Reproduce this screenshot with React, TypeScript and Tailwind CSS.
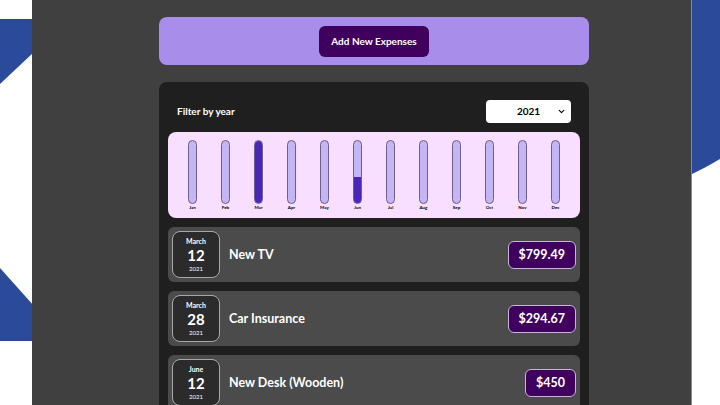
import { ChevronDown } from "lucide-react"

const months = ["Jan", "Feb", "Mar", "Apr", "May", "Jun", "Jul", "Aug", "Sep", "Oct", "Nov", "Dec"]
const fills = [0, 0, 100, 0, 0, 42, 0, 0, 0, 0, 0, 0]

const expenses = [
    { month: "March", day: "12", year: "2021", title: "New TV", amount: "$799.49" },
    { month: "March", day: "28", year: "2021", title: "Car Insurance", amount: "$294.67" },
    { month: "June", day: "12", year: "2021", title: "New Desk (Wooden)", amount: "$450" },
]

function ChartBar({ label, fill }: { label: string; fill: number }) {
    return (
        <div className="flex w-[33px] flex-col items-center">
            <div className="flex h-[64px] w-[9px] flex-col justify-end overflow-hidden rounded-full border border-[#6e5f86] bg-[#c4b6f4]">
                <div className="w-full bg-[#4a25b9]" style={{ height: `${fill}%` }} />
            </div>
            <span className="mt-[2px] text-[4.5px] font-bold leading-none text-black">{label}</span>
        </div>
    )
}

function ExpenseItem({ e }: { e: (typeof expenses)[number] }) {
    return (
        <div className="flex h-[55px] items-center rounded-md bg-[#4b4b4b] pl-[4px] pr-[4px]">
            <div className="flex h-[47px] w-[48px] flex-col items-center justify-center rounded-lg border border-[#a9a9a9] bg-[#2b2b2b] text-white">
                <span className="text-[7px] font-bold leading-none">{e.month}</span>
                <span className="mt-[3px] text-[15px] font-bold leading-none">{e.day}</span>
                <span className="mt-[3px] text-[6px] leading-none">{e.year}</span>
            </div>
            <h2 className="ml-[9px] mt-[2px] flex-1 text-[12.5px] font-bold text-white">{e.title}</h2>
            <div className="mt-[1px] rounded-md border border-[#c7b4d8] bg-[#40005d] px-[10px] py-[5px] text-[12.5px] font-bold leading-[16px] text-white">
                {e.amount}
            </div>
        </div>
    )
}

export default function App() {
    return (
        <div
            className="relative h-[405px] w-[720px] overflow-hidden bg-white"
            style={{ fontFamily: "Lato, 'Noto Sans', sans-serif" }}
        >
            {/* slide decorations behind the app */}
            <svg className="absolute left-0 top-0" width="720" height="405" viewBox="0 0 720 405">
                <polygon points="0,19 34,19 34,52 0,84" fill="#2b4a9a" />
                <polygon points="0,268 34,306 34,341 0,341" fill="#2b4a9a" />
                <circle cx="516" cy="-185" r="400" fill="#2b4a9a" />
            </svg>

            <div className="relative ml-[32px] h-full w-[660px] border-r border-[#8a8a8a] bg-[#404040] pl-[127px] pt-[17px]">
                <div className="flex h-[48px] w-[430px] items-center justify-center rounded-lg bg-[#a98deb]">
                    <button className="h-[31px] w-[110px] rounded-md bg-[#40005d] text-[10px] font-bold text-white">
                        Add New Expenses
                    </button>
                </div>

                <div className="mt-[17px] h-[340px] w-[430px] rounded-lg bg-[#1f1f1f] px-[9px]">
                    <div className="flex items-center justify-between pl-[9px] pr-[9px] pt-[18px]">
                        <span className="text-[10px] font-bold text-white">Filter by year</span>
                        <div className="relative flex h-[23px] w-[85px] items-center justify-center rounded bg-white text-[10px] font-bold text-black">
                            2021
                            <ChevronDown className="absolute right-[5px] top-[7px]" size={9} strokeWidth={3} />
                        </div>
                    </div>

                    <div className="mt-[9px] flex h-[86px] items-start rounded-lg bg-[#f8deff] px-[8px] pt-[8px]">
                        {months.map((m, i) => (
                            <ChartBar key={m} label={m} fill={fills[i]} />
                        ))}
                    </div>

                    <div className="mt-[9px] flex flex-col gap-[9px]">
                        {expenses.map((e) => (
                            <ExpenseItem key={e.title} e={e} />
                        ))}
                    </div>
                </div>
            </div>
        </div>
    )
}
